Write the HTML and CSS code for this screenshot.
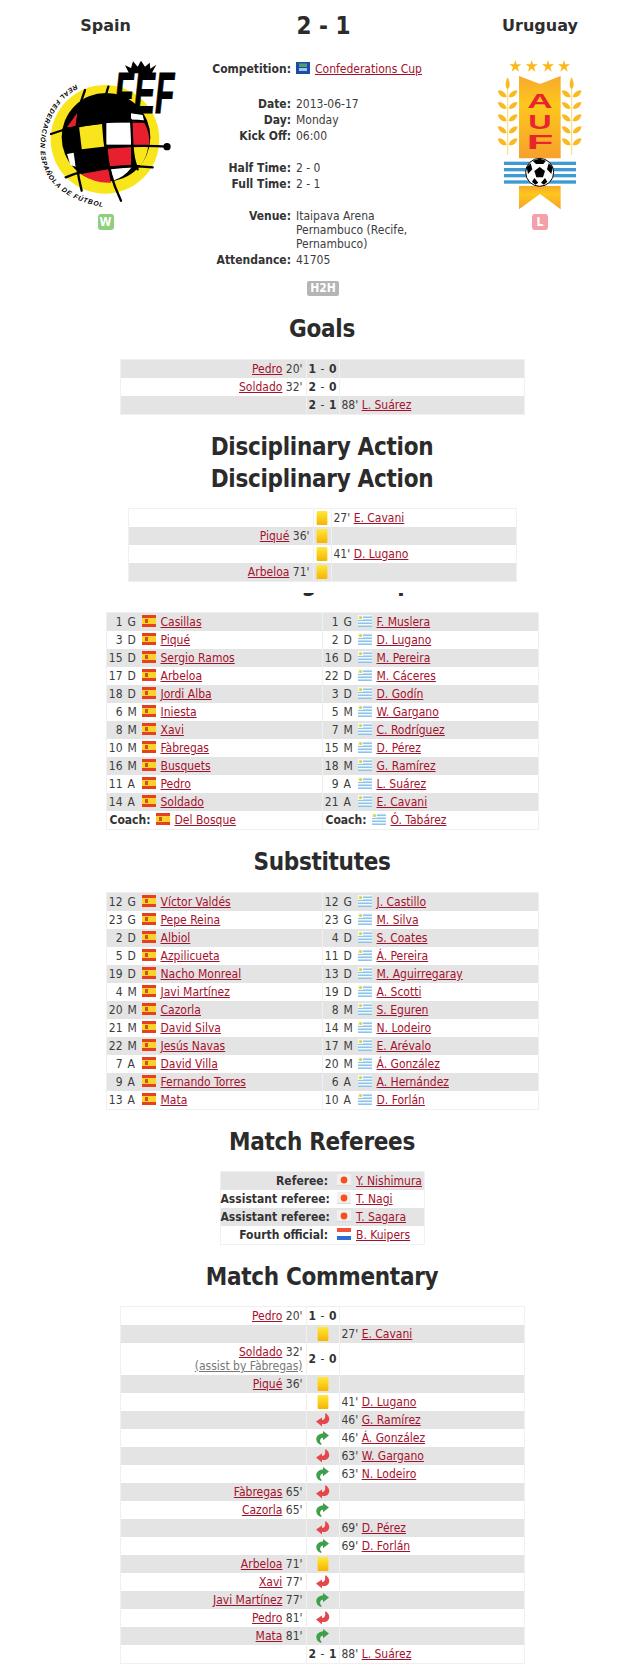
FILE: index.html
```html
<!DOCTYPE html>
<html lang="en">
<head>
<meta charset="utf-8">
<title>Spain 2 - 1 Uruguay</title>
<link rel="stylesheet" href="styles.css">
</head>
<body>
<svg class="defs" width="0" height="0" aria-hidden="true">
  <defs>
    <linearGradient id="cardG" x1="0" y1="0" x2="0" y2="1"><stop offset="0" stop-color="#ffe83a"/><stop offset="1" stop-color="#f7b400"/></linearGradient>
    <linearGradient id="ribbonG" x1="0" y1="0" x2="0" y2="1"><stop offset="0" stop-color="#f8a92c"/><stop offset=".35" stop-color="#fdc71c"/><stop offset="1" stop-color="#f7a02c"/></linearGradient>
    <symbol id="card" viewBox="0 0 11 13"><rect x=".5" width="10" height="13" rx="1" fill="url(#cardG)"/></symbol>
    <symbol id="out" viewBox="0 0 14 14"><path d="M0 8.5 6 4.5V7C8.5 7 9.8 4.5 9 1L10 .3C13 3 14.3 6 12.3 9 10.8 11 8.5 11.4 6 10.8V13.4Z" fill="#e4474c"/></symbol>
    <symbol id="in" viewBox="0 0 14 14"><path d="M13 4.5 7 0V2.5C3 2.5 .3 5 .3 8 .3 11 2 13 5 14L5.7 13C4 11.5 3.6 9.6 4.6 8.1 5 7.1 6 6.7 7 6.7V9.2Z" fill="#3f9f4a"/></symbol>
    <symbol id="es" viewBox="0 0 14 12"><rect width="14" height="12" fill="#e8401c"/><rect y="3" width="14" height="6" fill="#fbd22c"/><rect x="3" y="4" width="3" height="4" fill="#c8541c"/></symbol>
    <symbol id="uy" viewBox="0 0 14 12"><rect width="14" height="12" fill="#f4f8fc"/><rect y="1.5" width="14" height="1.5" fill="#8cc4ea"/><rect y="4.5" width="14" height="1.5" fill="#8cc4ea"/><rect y="7.5" width="14" height="1.5" fill="#8cc4ea"/><rect y="10.5" width="14" height="1.5" fill="#8cc4ea"/><rect width="5" height="5" fill="#f4f8fc"/><circle cx="2.5" cy="2.5" r="1.6" fill="#d6d83a"/></symbol>
    <symbol id="jp" viewBox="0 0 14 12"><rect width="14" height="12" fill="#f2f0ee"/><rect width="14" height="1" y="11" fill="#dcdad8"/><circle cx="7" cy="6" r="3.4" fill="#f4511e"/></symbol>
    <symbol id="nl" viewBox="0 0 14 12"><rect width="14" height="4" fill="#f4503c"/><rect y="4" width="14" height="4" fill="#fff"/><rect y="8" width="14" height="4" fill="#2c6cd4"/></symbol>
    <symbol id="cup" viewBox="0 0 14 12"><rect width="14" height="12" fill="#1c4caa"/><rect x="3" y="1.5" width="8" height="3.5" fill="#4fa070"/><rect x="3" y="6" width="8" height="3" fill="#a8c4e4"/></symbol>
  </defs>
</svg>

<header class="match">
  <div class="team">
    <h2 class="team-name">Spain</h2>
    <svg class="crest-es" viewBox="0 0 450 480" width="150" height="160" role="img" aria-label="Real Federación Española de Fútbol crest">
      <defs><path id="ringPath" d="M135 104C40 150 0 290 50 378 90 440 170 470 262 476"/></defs>
      <circle cx="222" cy="268" r="163" fill="#f9e51c"/>
      <circle cx="225" cy="262" r="133" fill="#000"/>
      <path d="M108 232 138 190 143 232Z" fill="#e8202e"/>
      <rect x="148" y="226" width="70" height="68" fill="#f9e51c" transform="rotate(-7 183 260)"/>
      <rect x="226" y="218" width="74" height="66" fill="#fff"/>
      <path d="M304 218 340 218Q358 250 354 286L304 284Z" fill="#e8202e"/>
      <path d="M230 296 300 290 300 345 236 350Z" fill="#e8202e"/>
      <path d="M306 290 352 288Q348 320 330 345L312 345Z" fill="#f9e51c"/>
      <path d="M108 312 128 308 134 350 118 345Z" fill="#fff"/>
      <path d="M150 372 232 358 240 398Q190 400 150 372Z" fill="#e8202e"/>
      <path d="M240 358 302 352Q280 382 246 392Z" fill="#fff"/>
      <path d="M300 190 335 195 340 215 300 215Z" fill="#fff"/>
      <g fill="none" stroke="#000" stroke-width="7" stroke-linecap="round">
        <path d="M60 252C140 222 270 205 345 215"/>
        <path d="M228 290C290 288 350 285 408 290" />
        <path d="M104 382C180 350 290 345 365 352"/>
        <path d="M162 120C130 200 125 320 152 422"/>
        <path d="M232 110C205 190 215 340 270 452"/>
        <path d="M300 210C305 260 300 320 320 358"/>
      </g>
      <circle cx="408" cy="290" r="11" fill="#000"/>
      <text class="crest-fef" transform="translate(250 190) scale(1 1.45)" textLength="180" lengthAdjust="spacingAndGlyphs">FEF</text>
      <path d="M282 46 300 54 306 34 320 50 330 32 342 50 356 38 358 56 376 44 362 70 294 70Z" fill="#000"/>
      <text class="crest-ring"><textPath href="#ringPath">REAL FEDERACIÓN ESPAÑOLA DE FÚTBOL</textPath></text>
    </svg>
    <span class="badge win">W</span>
  </div>

  <div class="info">
    <h2 class="score">2 - 1</h2>
    <table class="facts">
      <tr><th>Competition:</th><td><svg class="flag"><use href="#cup"/></svg><a href="#">Confederations Cup</a></td></tr>
      <tr class="gap-lg"><td colspan="2"></td></tr>
      <tr><th>Date:</th><td>2013-06-17</td></tr>
      <tr><th>Day:</th><td>Monday</td></tr>
      <tr><th>Kick Off:</th><td>06:00</td></tr>
      <tr class="gap"><td colspan="2"></td></tr>
      <tr><th>Half Time:</th><td>2 - 0</td></tr>
      <tr><th>Full Time:</th><td>2 - 1</td></tr>
      <tr class="gap"><td colspan="2"></td></tr>
      <tr><th>Venue:</th><td>Itaipava Arena Pernambuco (Recife, Pernambuco)</td></tr>
      <tr><th>Attendance:</th><td>41705</td></tr>
    </table>
    <span class="h2h">H2H</span>
  </div>

  <div class="team">
    <h2 class="team-name">Uruguay</h2>
    <svg class="crest-uy" viewBox="0 0 300 480" width="100" height="160" role="img" aria-label="Asociación Uruguaya de Fútbol crest">
      <defs>
        <g id="wheat">
          <path d="M0 85V315" stroke="#fcd96a" stroke-width="3"/>
          <path d="M0 82C-9 100-7 112 0 118 7 112 9 100 0 82Z" fill="#f9b925"/>
          <g id="grainrow"><path id="grain" d="M-3 140C-8 124-20 120-30 122-26 136-14 146-3 140Z" fill="#f9b925"/><path d="M3 140C8 124 20 120 30 122 26 136 14 146 3 140Z" fill="#f9b925"/></g>
          <use href="#grainrow" y="35"/><use href="#grainrow" y="72"/><use href="#grainrow" y="108"/><use href="#grainrow" y="144"/>
        </g>
      </defs>
      <g fill="#fbb81c">
        <path id="star" d="M76 30 80 43H94L83 51 87 65 76 56 65 65 69 51 58 43H72Z"/>
        <use href="#star" x="49"/><use href="#star" x="98"/><use href="#star" x="146"/>
      </g>
      <use href="#wheat" x="53"/><use href="#wheat" x="245"/>
      <path d="M87 78 150 102 212 78V325H87Z" fill="url(#ribbonG)"/>
      <text class="crest-auf" x="112" y="175" textLength="76" lengthAdjust="spacingAndGlyphs">A</text>
      <text class="crest-auf" x="115" y="236" textLength="70" lengthAdjust="spacingAndGlyphs">U</text>
      <text class="crest-auf" x="110" y="298" textLength="80" lengthAdjust="spacingAndGlyphs">F</text>
      <g fill="#3d9ad2">
        <rect x="42" y="335" width="216" height="10"/><rect x="42" y="354" width="216" height="10"/>
        <rect x="42" y="372" width="216" height="10"/><rect x="42" y="391" width="216" height="10"/>
      </g>
      <path d="M87 408H212V478L150 432 87 478Z" fill="url(#ribbonG)"/>
      <circle cx="149" cy="367" r="42" fill="#fff" stroke="#000" stroke-width="3"/>
      <path d="M149 351 165 363 159 382H139L133 363Z" fill="#000"/>
      <path d="M128 332 149 326 168 332 160 342 138 342Z M110 352 122 340 127 358 114 372Z M188 352 176 340 171 358 184 372Z M126 395 133 384 145 398 136 404Z M172 395 165 384 153 398 162 404Z" fill="#000"/>
    </svg>
    <span class="badge loss">L</span>
  </div>
</header>

<main class="content">
<h2 class="section">Goals</h2>
<table class="events goals">
  <tr class="alt"><td class="l"><a href="#">Pedro</a> 20'</td><td class="c"><b>1</b> - <b>0</b></td><td class="r"></td></tr>
  <tr><td class="l"><a href="#">Soldado</a> 32'</td><td class="c"><b>2</b> - <b>0</b></td><td class="r"></td></tr>
  <tr class="alt"><td class="l"></td><td class="c"><b>2</b> - <b>1</b></td><td class="r">88' <a href="#">L. Suárez</a></td></tr>
</table>

<h2 class="section">Disciplinary Action</h2>
<h2 class="section twin">Disciplinary Action</h2>
<table class="events cards">
  <tr><td class="l"></td><td class="c"><svg class="ico"><use href="#card"/></svg></td><td class="r">27' <a href="#">E. Cavani</a></td></tr>
  <tr class="alt"><td class="l"><a href="#">Piqué</a> 36'</td><td class="c"><svg class="ico"><use href="#card"/></svg></td><td class="r"></td></tr>
  <tr><td class="l"></td><td class="c"><svg class="ico"><use href="#card"/></svg></td><td class="r">41' <a href="#">D. Lugano</a></td></tr>
  <tr class="alt"><td class="l"><a href="#">Arbeloa</a> 71'</td><td class="c"><svg class="ico"><use href="#card"/></svg></td><td class="r"></td></tr>
</table>

<div class="clipped"><h2 class="section-clipped">Starting Line-ups</h2></div>
<table class="squad">
  <tr class="alt"><td><span class="num">1</span><span class="pos">G</span><svg class="flag"><use href="#es"/></svg><a href="#">Casillas</a></td><td><span class="num">1</span><span class="pos">G</span><svg class="flag"><use href="#uy"/></svg><a href="#">F. Muslera</a></td></tr>
  <tr><td><span class="num">3</span><span class="pos">D</span><svg class="flag"><use href="#es"/></svg><a href="#">Piqué</a></td><td><span class="num">2</span><span class="pos">D</span><svg class="flag"><use href="#uy"/></svg><a href="#">D. Lugano</a></td></tr>
  <tr class="alt"><td><span class="num">15</span><span class="pos">D</span><svg class="flag"><use href="#es"/></svg><a href="#">Sergio Ramos</a></td><td><span class="num">16</span><span class="pos">D</span><svg class="flag"><use href="#uy"/></svg><a href="#">M. Pereira</a></td></tr>
  <tr><td><span class="num">17</span><span class="pos">D</span><svg class="flag"><use href="#es"/></svg><a href="#">Arbeloa</a></td><td><span class="num">22</span><span class="pos">D</span><svg class="flag"><use href="#uy"/></svg><a href="#">M. Cáceres</a></td></tr>
  <tr class="alt"><td><span class="num">18</span><span class="pos">D</span><svg class="flag"><use href="#es"/></svg><a href="#">Jordi Alba</a></td><td><span class="num">3</span><span class="pos">D</span><svg class="flag"><use href="#uy"/></svg><a href="#">D. Godín</a></td></tr>
  <tr><td><span class="num">6</span><span class="pos">M</span><svg class="flag"><use href="#es"/></svg><a href="#">Iniesta</a></td><td><span class="num">5</span><span class="pos">M</span><svg class="flag"><use href="#uy"/></svg><a href="#">W. Gargano</a></td></tr>
  <tr class="alt"><td><span class="num">8</span><span class="pos">M</span><svg class="flag"><use href="#es"/></svg><a href="#">Xavi</a></td><td><span class="num">7</span><span class="pos">M</span><svg class="flag"><use href="#uy"/></svg><a href="#">C. Rodríguez</a></td></tr>
  <tr><td><span class="num">10</span><span class="pos">M</span><svg class="flag"><use href="#es"/></svg><a href="#">Fàbregas</a></td><td><span class="num">15</span><span class="pos">M</span><svg class="flag"><use href="#uy"/></svg><a href="#">D. Pérez</a></td></tr>
  <tr class="alt"><td><span class="num">16</span><span class="pos">M</span><svg class="flag"><use href="#es"/></svg><a href="#">Busquets</a></td><td><span class="num">18</span><span class="pos">M</span><svg class="flag"><use href="#uy"/></svg><a href="#">G. Ramírez</a></td></tr>
  <tr><td><span class="num">11</span><span class="pos">A</span><svg class="flag"><use href="#es"/></svg><a href="#">Pedro</a></td><td><span class="num">9</span><span class="pos">A</span><svg class="flag"><use href="#uy"/></svg><a href="#">L. Suárez</a></td></tr>
  <tr class="alt"><td><span class="num">14</span><span class="pos">A</span><svg class="flag"><use href="#es"/></svg><a href="#">Soldado</a></td><td><span class="num">21</span><span class="pos">A</span><svg class="flag"><use href="#uy"/></svg><a href="#">E. Cavani</a></td></tr>
  <tr><td><b class="coach">Coach:</b><svg class="flag"><use href="#es"/></svg><a href="#">Del Bosque</a></td><td><b class="coach">Coach:</b><svg class="flag"><use href="#uy"/></svg><a href="#">Ó. Tabárez</a></td></tr>
</table>

<h2 class="section">Substitutes</h2>
<table class="squad">
  <tr class="alt"><td><span class="num">12</span><span class="pos">G</span><svg class="flag"><use href="#es"/></svg><a href="#">Víctor Valdés</a></td><td><span class="num">12</span><span class="pos">G</span><svg class="flag"><use href="#uy"/></svg><a href="#">J. Castillo</a></td></tr>
  <tr><td><span class="num">23</span><span class="pos">G</span><svg class="flag"><use href="#es"/></svg><a href="#">Pepe Reina</a></td><td><span class="num">23</span><span class="pos">G</span><svg class="flag"><use href="#uy"/></svg><a href="#">M. Silva</a></td></tr>
  <tr class="alt"><td><span class="num">2</span><span class="pos">D</span><svg class="flag"><use href="#es"/></svg><a href="#">Albiol</a></td><td><span class="num">4</span><span class="pos">D</span><svg class="flag"><use href="#uy"/></svg><a href="#">S. Coates</a></td></tr>
  <tr><td><span class="num">5</span><span class="pos">D</span><svg class="flag"><use href="#es"/></svg><a href="#">Azpilicueta</a></td><td><span class="num">11</span><span class="pos">D</span><svg class="flag"><use href="#uy"/></svg><a href="#">Á. Pereira</a></td></tr>
  <tr class="alt"><td><span class="num">19</span><span class="pos">D</span><svg class="flag"><use href="#es"/></svg><a href="#">Nacho Monreal</a></td><td><span class="num">13</span><span class="pos">D</span><svg class="flag"><use href="#uy"/></svg><a href="#">M. Aguirregaray</a></td></tr>
  <tr><td><span class="num">4</span><span class="pos">M</span><svg class="flag"><use href="#es"/></svg><a href="#">Javi Martínez</a></td><td><span class="num">19</span><span class="pos">D</span><svg class="flag"><use href="#uy"/></svg><a href="#">A. Scotti</a></td></tr>
  <tr class="alt"><td><span class="num">20</span><span class="pos">M</span><svg class="flag"><use href="#es"/></svg><a href="#">Cazorla</a></td><td><span class="num">8</span><span class="pos">M</span><svg class="flag"><use href="#uy"/></svg><a href="#">S. Eguren</a></td></tr>
  <tr><td><span class="num">21</span><span class="pos">M</span><svg class="flag"><use href="#es"/></svg><a href="#">David Silva</a></td><td><span class="num">14</span><span class="pos">M</span><svg class="flag"><use href="#uy"/></svg><a href="#">N. Lodeiro</a></td></tr>
  <tr class="alt"><td><span class="num">22</span><span class="pos">M</span><svg class="flag"><use href="#es"/></svg><a href="#">Jesús Navas</a></td><td><span class="num">17</span><span class="pos">M</span><svg class="flag"><use href="#uy"/></svg><a href="#">E. Arévalo</a></td></tr>
  <tr><td><span class="num">7</span><span class="pos">A</span><svg class="flag"><use href="#es"/></svg><a href="#">David Villa</a></td><td><span class="num">20</span><span class="pos">M</span><svg class="flag"><use href="#uy"/></svg><a href="#">Á. González</a></td></tr>
  <tr class="alt"><td><span class="num">9</span><span class="pos">A</span><svg class="flag"><use href="#es"/></svg><a href="#">Fernando Torres</a></td><td><span class="num">6</span><span class="pos">A</span><svg class="flag"><use href="#uy"/></svg><a href="#">A. Hernández</a></td></tr>
  <tr><td><span class="num">13</span><span class="pos">A</span><svg class="flag"><use href="#es"/></svg><a href="#">Mata</a></td><td><span class="num">10</span><span class="pos">A</span><svg class="flag"><use href="#uy"/></svg><a href="#">D. Forlán</a></td></tr>
</table>

<h2 class="section tight">Match Referees</h2>
<table class="refs">
  <tr class="alt"><th>Referee:</th><td><svg class="flag"><use href="#jp"/></svg><a href="#">Y. Nishimura</a></td></tr>
  <tr><th>Assistant referee:</th><td><svg class="flag"><use href="#jp"/></svg><a href="#">T. Nagi</a></td></tr>
  <tr class="alt"><th>Assistant referee:</th><td><svg class="flag"><use href="#jp"/></svg><a href="#">T. Sagara</a></td></tr>
  <tr><th>Fourth official:</th><td><svg class="flag"><use href="#nl"/></svg><a href="#">B. Kuipers</a></td></tr>
</table>

<h2 class="section tight">Match Commentary</h2>
<table class="events goals">
  <tr><td class="l"><a href="#">Pedro</a> 20'</td><td class="c"><b>1</b> - <b>0</b></td><td class="r"></td></tr>
  <tr class="alt"><td class="l"></td><td class="c"><svg class="ico"><use href="#card"/></svg></td><td class="r">27' <a href="#">E. Cavani</a></td></tr>
  <tr><td class="l"><a href="#">Soldado</a> 32'<br><a class="assist" href="#">(assist by Fàbregas)</a></td><td class="c"><b>2</b> - <b>0</b></td><td class="r"></td></tr>
  <tr class="alt"><td class="l"><a href="#">Piqué</a> 36'</td><td class="c"><svg class="ico"><use href="#card"/></svg></td><td class="r"></td></tr>
  <tr><td class="l"></td><td class="c"><svg class="ico"><use href="#card"/></svg></td><td class="r">41' <a href="#">D. Lugano</a></td></tr>
  <tr class="alt"><td class="l"></td><td class="c"><svg class="ico"><use href="#out"/></svg></td><td class="r">46' <a href="#">G. Ramírez</a></td></tr>
  <tr><td class="l"></td><td class="c"><svg class="ico"><use href="#in"/></svg></td><td class="r">46' <a href="#">Á. González</a></td></tr>
  <tr class="alt"><td class="l"></td><td class="c"><svg class="ico"><use href="#out"/></svg></td><td class="r">63' <a href="#">W. Gargano</a></td></tr>
  <tr><td class="l"></td><td class="c"><svg class="ico"><use href="#in"/></svg></td><td class="r">63' <a href="#">N. Lodeiro</a></td></tr>
  <tr class="alt"><td class="l"><a href="#">Fàbregas</a> 65'</td><td class="c"><svg class="ico"><use href="#out"/></svg></td><td class="r"></td></tr>
  <tr><td class="l"><a href="#">Cazorla</a> 65'</td><td class="c"><svg class="ico"><use href="#in"/></svg></td><td class="r"></td></tr>
  <tr class="alt"><td class="l"></td><td class="c"><svg class="ico"><use href="#out"/></svg></td><td class="r">69' <a href="#">D. Pérez</a></td></tr>
  <tr><td class="l"></td><td class="c"><svg class="ico"><use href="#in"/></svg></td><td class="r">69' <a href="#">D. Forlán</a></td></tr>
  <tr class="alt"><td class="l"><a href="#">Arbeloa</a> 71'</td><td class="c"><svg class="ico"><use href="#card"/></svg></td><td class="r"></td></tr>
  <tr><td class="l"><a href="#">Xavi</a> 77'</td><td class="c"><svg class="ico"><use href="#out"/></svg></td><td class="r"></td></tr>
  <tr class="alt"><td class="l"><a href="#">Javi Martínez</a> 77'</td><td class="c"><svg class="ico"><use href="#in"/></svg></td><td class="r"></td></tr>
  <tr><td class="l"><a href="#">Pedro</a> 81'</td><td class="c"><svg class="ico"><use href="#out"/></svg></td><td class="r"></td></tr>
  <tr class="alt"><td class="l"><a href="#">Mata</a> 81'</td><td class="c"><svg class="ico"><use href="#in"/></svg></td><td class="r"></td></tr>
  <tr><td class="l"></td><td class="c"><b>2</b> - <b>1</b></td><td class="r">88' <a href="#">L. Suárez</a></td></tr>
</table>
</main>
</body>
</html>
```
FILE: styles.css
```css
* { box-sizing: border-box; }

html, body { background: #fff; }

body {
  margin: 0;
  padding-bottom: 10px;
  color: #3d3d3d;
  font: 12px/14px "DejaVu Sans Condensed", "DejaVu Sans", sans-serif;
}

a { color: #a5102c; text-decoration: underline; }
b { color: #333; }

.defs { position: absolute; }

/* Header */
.match {
  display: grid;
  grid-template-columns: 211px 227px 204px;
  padding-top: 10px;
}

.team, .info {
  display: flex;
  flex-direction: column;
  align-items: center;
}

.team-name {
  margin: 0;
  color: #2e2e2e;
  font-family: "DejaVu Sans", sans-serif;
  font-size: 16px;
  line-height: 32px;
}

.crest-es, .crest-uy { display: block; margin-top: 8px; }

.crest-fef {
  font: italic 900 118px "Liberation Sans", sans-serif;
  fill: #000;
  stroke: #000;
  stroke-width: 2px;
}

.crest-ring {
  font: italic 700 20px "Liberation Sans", sans-serif;
  fill: #000;
  letter-spacing: 2.6px;
}

.crest-auf {
  font: 700 62px "Liberation Sans", sans-serif;
  fill: #e8242c;
}

.badge {
  width: 16px;
  height: 16px;
  margin-top: 4px;
  border-radius: 3px;
  color: #fff;
  font-weight: 700;
  font-size: 12px;
  line-height: 16px;
  text-align: center;
}

.win { background: #8fce7e; }
.loss { background: #f5a0a8; }

.score {
  margin: 0 2px 19px 0;
  color: #2b2b2b;
  font-size: 24px;
  line-height: 32px;
}

.facts {
  align-self: flex-start;
  border-collapse: collapse;
}

.facts th {
  width: 80px;
  padding: 1px 0;
  color: #333;
  font-weight: 700;
  text-align: right;
  vertical-align: top;
  white-space: nowrap;
}

.facts td {
  width: 147px;
  padding: 1px 0 1px 5px;
  vertical-align: top;
}

.facts .gap td { height: 16px; padding: 0; }
.facts .gap-lg td { height: 19px; padding: 0; }

.h2h {
  margin: 13px 3px 1px 0;
  padding: 0 3px;
  border-radius: 2px;
  background: #b5b5b5;
  color: #fff;
  font-weight: 700;
  font-size: 12px;
  line-height: 15px;
}

/* Main column */
.content { padding-left: 2px; }

/* Section headings */
.section {
  margin: 16px 0 14px;
  color: #2b2b2b;
  font-size: 24px;
  line-height: 32px;
  letter-spacing: -.3px;
  text-align: center;
}

.section.twin { margin-top: -14px; margin-bottom: 13px; }
.section.tight { margin-bottom: 13px; }

.clipped {
  height: 4px;
  margin: 11px 0 15px;
  overflow: hidden;
}

.section-clipped {
  margin: -26px 0 0;
  color: #2b2b2b;
  font-size: 24px;
  line-height: 32px;
  letter-spacing: -.3px;
  text-align: center;
}

/* Tables */
table.events, table.squad, table.refs {
  margin: 0 auto;
  border-collapse: collapse;
  border: 1px solid #f0f0f0;
  table-layout: fixed;
}

.alt td, .alt th { background: #e4e4e4; }

.events td {
  height: 18px;
  padding: 2px 0;
}

.events .l { padding-right: 3px; text-align: right; }

.events .c {
  border-left: 1px solid #f0f0f0;
  border-right: 1px solid #f0f0f0;
  text-align: center;
  white-space: nowrap;
  word-spacing: 1px;
}

.events .r { padding-left: 2px; }

.goals { width: 405px; }
.goals .l { width: 186px; }
.goals .c { width: 33px; }

.cards { width: 389px; }
.cards .l { width: 185px; }
.cards .c { width: 18px; }

.ico { display: inline-block; width: 14px; height: 14px; vertical-align: top; }

.assist { color: #777; }

.squad { width: 433px; }

.squad td {
  width: 216px;
  height: 18px;
  padding: 2px 0;
  white-space: nowrap;
}

.squad td + td { border-left: 1px solid #f0f0f0; }

.num { display: inline-block; width: 16px; text-align: right; }
.pos { display: inline-block; width: 19px; padding-left: 5px; }
.coach { display: inline-block; width: 49px; padding-left: 3px; }

.flag {
  display: inline-block;
  width: 14px;
  height: 12px;
  margin-right: 5px;
  vertical-align: top;
}

.refs { width: 205px; }

.refs th {
  width: 114px;
  height: 18px;
  padding: 2px 6px 2px 0;
  color: #333;
  font-weight: 700;
  text-align: right;
  white-space: nowrap;
}

.refs td { padding: 2px 0 2px 3px; white-space: nowrap; }
```
